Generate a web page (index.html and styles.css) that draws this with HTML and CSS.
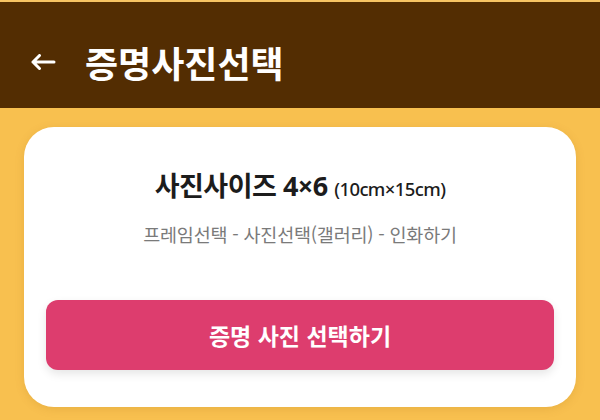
FILE: index.html
```html
<!DOCTYPE html>
<html lang="ko">
<head>
<meta charset="utf-8">
<link rel="stylesheet" href="styles.css">
</head>
<body>
<div class="topline"></div>
<header class="appbar">
  <svg class="back" width="26" height="16" viewBox="0 0 26 16" aria-hidden="true">
    <path d="M24 8H3M9.5 1.5L3 8l6.5 6.5" fill="none" stroke="#fff" stroke-width="3" stroke-linecap="round" stroke-linejoin="round"/>
  </svg>
  <h1 class="appbar-title">증명사진선택</h1>
</header>
<main class="content">
  <section class="card">
    <h2 class="card-title">사진사이즈 4×6 <span class="card-title-sub">(10cm×15cm)</span></h2>
    <p class="card-desc">프레임선택 - 사진선택(갤러리) - 인화하기</p>
    <button class="primary-btn">증명 사진 선택하기</button>
  </section>
</main>
</body>
</html>
```
FILE: styles.css
```css
html, body {
  margin: 0;
  padding: 0;
}
body {
  width: 600px;
  height: 420px;
  overflow: hidden;
  background: #f8c04f;
  font-family: "Noto Sans CJK KR", "Noto Sans", sans-serif;
}
.topline {
  height: 2px;
  background: #f7c463;
}
.appbar {
  height: 93px;
  padding-top: 13px;
  background: #532d02;
  display: flex;
  align-items: center;
  padding-left: 30px;
}
.back {
  display: block;
  margin-right: 29px;
}
.appbar-title {
  margin: 0;
  color: #fff;
  font-size: 36px;
  font-weight: 700;
  line-height: 42px;
  letter-spacing: 0;
}
.content {
  padding: 19px 24px 0;
}
.card {
  background: #fff;
  border-radius: 30px;
  padding: 41px 22px 37px;
  box-shadow: 0 2px 10px rgba(150, 90, 0, 0.15);
  display: flex;
  flex-direction: column;
  align-items: center;
}
.card-title {
  margin: 0;
  font-family: "Noto Sans", "Noto Sans CJK KR", sans-serif;
  font-size: 27px;
  line-height: 36px;
  font-weight: 700;
  color: #1c1c1c;
  letter-spacing: -0.5px;
}
.card-title-sub {
  font-size: 18.5px;
  font-weight: 500;
  letter-spacing: -0.6px;
}
.card-desc {
  margin: 14px 0 0;
  font-size: 18.5px;
  line-height: 26px;
  color: #7a7a7a;
  letter-spacing: -0.2px;
}
.primary-btn {
  margin-top: 53px;
  width: 100%;
  height: 70px;
  border: 0;
  border-radius: 12px;
  background: #dd3d6e;
  color: #fff;
  font-family: inherit;
  font-size: 23px;
  font-weight: 700;
  box-shadow: 0 4px 10px rgba(0, 0, 0, 0.1);
}
```
